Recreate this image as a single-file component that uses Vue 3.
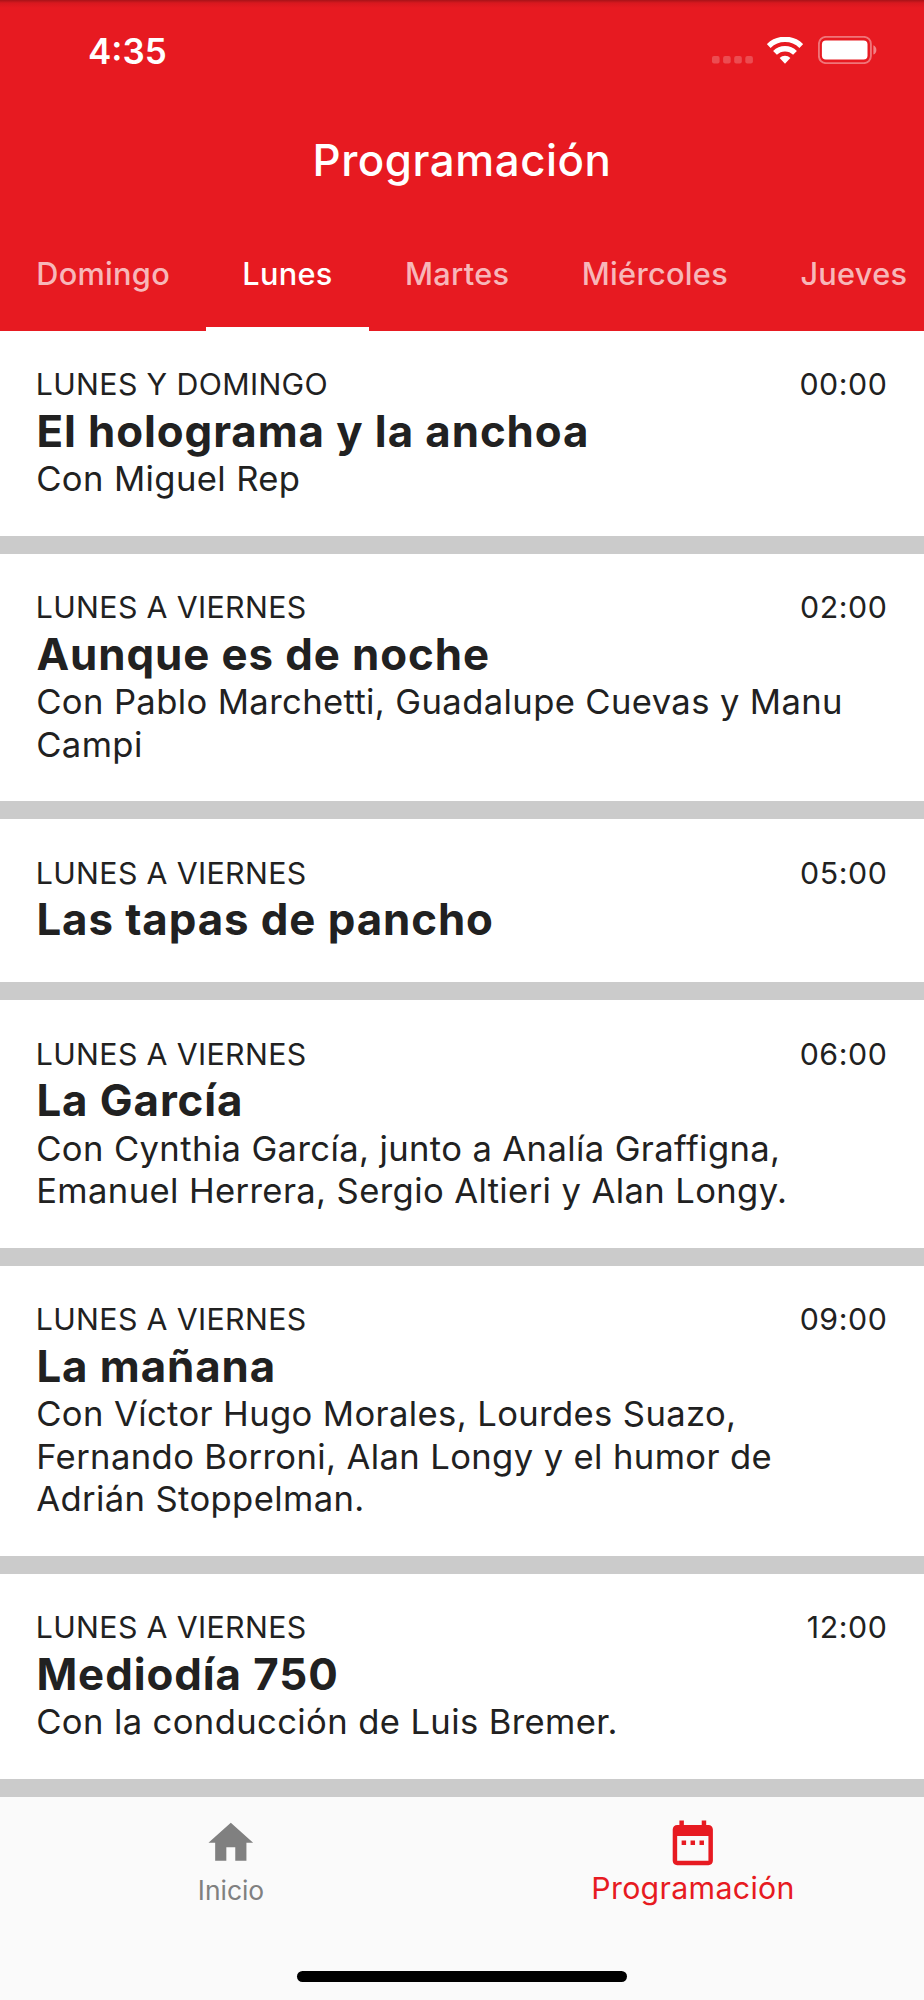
<template>
  <div class="screen">
    <header class="header">
      <div class="status">
        <span class="clock">4:35</span>
        <div class="indicators">
          <svg class="signal" width="42" height="8" viewBox="0 0 42 8">
            <rect v-for="n in 4" :key="n" :x="(n - 1) * 11.1" y="0" width="7.6" height="7.4" rx="2" />
          </svg>
          <svg class="wifi" width="36" height="27" viewBox="0 0 36 27">
            <path d="M1.7 9a23.3 23.3 0 0 1 32.6 0" />
            <path d="M8 15.8a14.2 14.2 0 0 1 20 0" />
            <path class="fill" d="M12.6 21a7.8 7.8 0 0 1 10.8 0L18 26.8z" />
          </svg>
          <svg class="battery" width="59" height="28" viewBox="0 0 59 28">
            <rect class="shell" x="0.9" y="0.9" width="52" height="26.2" rx="7" />
            <rect class="charge" x="3.9" y="4.4" width="45.6" height="19.2" rx="4" />
            <path class="cap" d="M55.4 9.2c4 1.6 4 7.8 0 9.4z" />
          </svg>
        </div>
      </div>
      <h1 class="title">Programación</h1>
      <nav class="tabs">
        <button
          v-for="day in days"
          :key="day"
          class="tab"
          :class="{ active: day === selected }"
          @click="selected = day"
        >
          {{ day }}
        </button>
      </nav>
    </header>

    <main class="list">
      <article v-for="show in shows" :key="show.time" class="show">
        <div class="show-top">
          <span>{{ show.days }}</span>
          <span class="show-time">{{ show.time }}</span>
        </div>
        <h2 class="show-name">{{ show.name }}</h2>
        <p v-if="show.hosts" class="show-hosts">{{ show.hosts }}</p>
      </article>
    </main>

    <footer class="bottom">
      <div class="bottom-nav">
        <a class="item">
          <svg class="icon" viewBox="0 0 24 24"><path d="M10 20v-6h4v6h5v-8h3L12 3 2 12h3v8z" /></svg>
          <span>Inicio</span>
        </a>
        <a class="item current">
          <svg class="icon" viewBox="0 0 24 24">
            <path
              d="M9 11H7v2h2v-2zm4 0h-2v2h2v-2zm4 0h-2v2h2v-2zm2-7h-1V2h-2v2H8V2H6v2H5c-1.11 0-1.99.9-1.99 2L3 20c0 1.1.89 2 2 2h14c1.1 0 2-.9 2-2V6c0-1.1-.9-2-2-2zm0 16H5V9h14v11z"
            />
          </svg>
          <span>Programación</span>
        </a>
      </div>
      <div class="home-bar"></div>
    </footer>
  </div>
</template>

<script setup>
import { ref } from 'vue'

const days = ['Domingo', 'Lunes', 'Martes', 'Miércoles', 'Jueves']
const selected = ref('Lunes')

const shows = [
  { days: 'LUNES Y DOMINGO', time: '00:00', name: 'El holograma y la anchoa', hosts: 'Con Miguel Rep' },
  {
    days: 'LUNES A VIERNES',
    time: '02:00',
    name: 'Aunque es de noche',
    hosts: 'Con Pablo Marchetti, Guadalupe Cuevas y Manu Campi',
  },
  { days: 'LUNES A VIERNES', time: '05:00', name: 'Las tapas de pancho' },
  {
    days: 'LUNES A VIERNES',
    time: '06:00',
    name: 'La García',
    hosts: 'Con Cynthia García, junto a Analía Graffigna, Emanuel Herrera, Sergio Altieri y Alan Longy.',
  },
  {
    days: 'LUNES A VIERNES',
    time: '09:00',
    name: 'La mañana',
    hosts:
      'Con Víctor Hugo Morales, Lourdes Suazo, Fernando Borroni, Alan Longy y el humor de Adrián Stoppelman.',
  },
  { days: 'LUNES A VIERNES', time: '12:00', name: 'Mediodía 750', hosts: 'Con la conducción de Luis Bremer.' },
]
</script>

<style>
body {
  margin: 0;
}
</style>

<style scoped>
.screen {
  width: 924px;
  height: 2000px;
  display: flex;
  flex-direction: column;
  overflow: hidden;
  background: #fff;
  color: #212121;
  font-family: Inter, 'Liberation Sans', sans-serif;
}

.header {
  height: 330.6px;
  flex: none;
  display: flex;
  flex-direction: column;
  background: linear-gradient(#a81318, #d8181f 3px, #e71a21 8px);
  color: #fff;
}

.status {
  height: 98.2px;
  box-sizing: border-box;
  padding: 2px 47px 0 88px;
  display: flex;
  align-items: center;
  justify-content: space-between;
}

.clock {
  padding-top: 2px;
  font-size: 35px;
  font-weight: 600;
  line-height: 42px;
}

.indicators {
  display: flex;
  align-items: flex-end;
}

.signal {
  margin-right: 13px;
  fill: rgba(255, 255, 255, 0.22);
}

.wifi {
  margin-right: 15px;
  fill: none;
  stroke: #fff;
  stroke-width: 5.4;
}

.wifi .fill {
  fill: #fff;
  stroke: none;
}

.shell {
  fill: none;
  stroke: rgba(255, 255, 255, 0.4);
  stroke-width: 1.9;
}

.charge {
  fill: #fff;
}

.cap {
  fill: rgba(255, 255, 255, 0.45);
}

.title {
  height: 125px;
  margin: 0;
  font-size: 43.8px;
  font-weight: 500;
  line-height: 126px;
  letter-spacing: 0.55px;
  text-align: center;
}

.tabs {
  flex: 1;
  display: flex;
}

.tab {
  flex: none;
  padding: 0 36.2px 2px;
  border: none;
  border-bottom: 4.5px solid transparent;
  background: none;
  color: rgba(255, 255, 255, 0.7);
  font-family: inherit;
  font-size: 30.7px;
  font-weight: 500;
  letter-spacing: 0.3px;
  cursor: pointer;
}

.tab.active {
  border-color: #fff;
  color: #fff;
}

.list {
  display: flex;
  flex-direction: column;
  gap: 17.86px;
  padding-bottom: 17.86px;
  background: #cbcbcb;
}

.show {
  padding: 35.7px;
  background: #fff;
}

.show-top {
  height: 37.94px;
  display: flex;
  justify-content: space-between;
  font-size: 30.3px;
  line-height: 36.4px;
  letter-spacing: 0.37px;
}

.show-time {
  margin-right: 1px;
  letter-spacing: 0.55px;
}

.show-name {
  margin: 0;
  padding: 0.5px 0 0 0.7px;
  font-size: 43.8px;
  font-weight: 700;
  line-height: 53.07px;
  letter-spacing: 0.93px;
}

.show-hosts {
  margin: -0.6px 0 0.6px;
  padding-left: 0.5px;
  font-size: 34.6px;
  line-height: 42.41px;
  letter-spacing: 0.39px;
}

.bottom {
  flex: 1;
  display: flex;
  flex-direction: column;
  align-items: center;
  justify-content: space-between;
  padding: 19.3px 0 18px;
  background: #fafafa;
}

.bottom-nav {
  width: 100%;
  display: flex;
}

.item {
  flex: 1;
  display: flex;
  flex-direction: column;
  align-items: center;
  color: #808080;
  font-size: 26.4px;
  line-height: 40px;
}

.item.current {
  color: #e71a21;
  font-size: 30.3px;
  line-height: 36px;
  letter-spacing: 0.32px;
}

.icon {
  width: 53.6px;
  height: 53.6px;
  fill: currentColor;
}

.home-bar {
  width: 330px;
  height: 11.3px;
  border-radius: 6px;
  background: #000;
}
</style>
